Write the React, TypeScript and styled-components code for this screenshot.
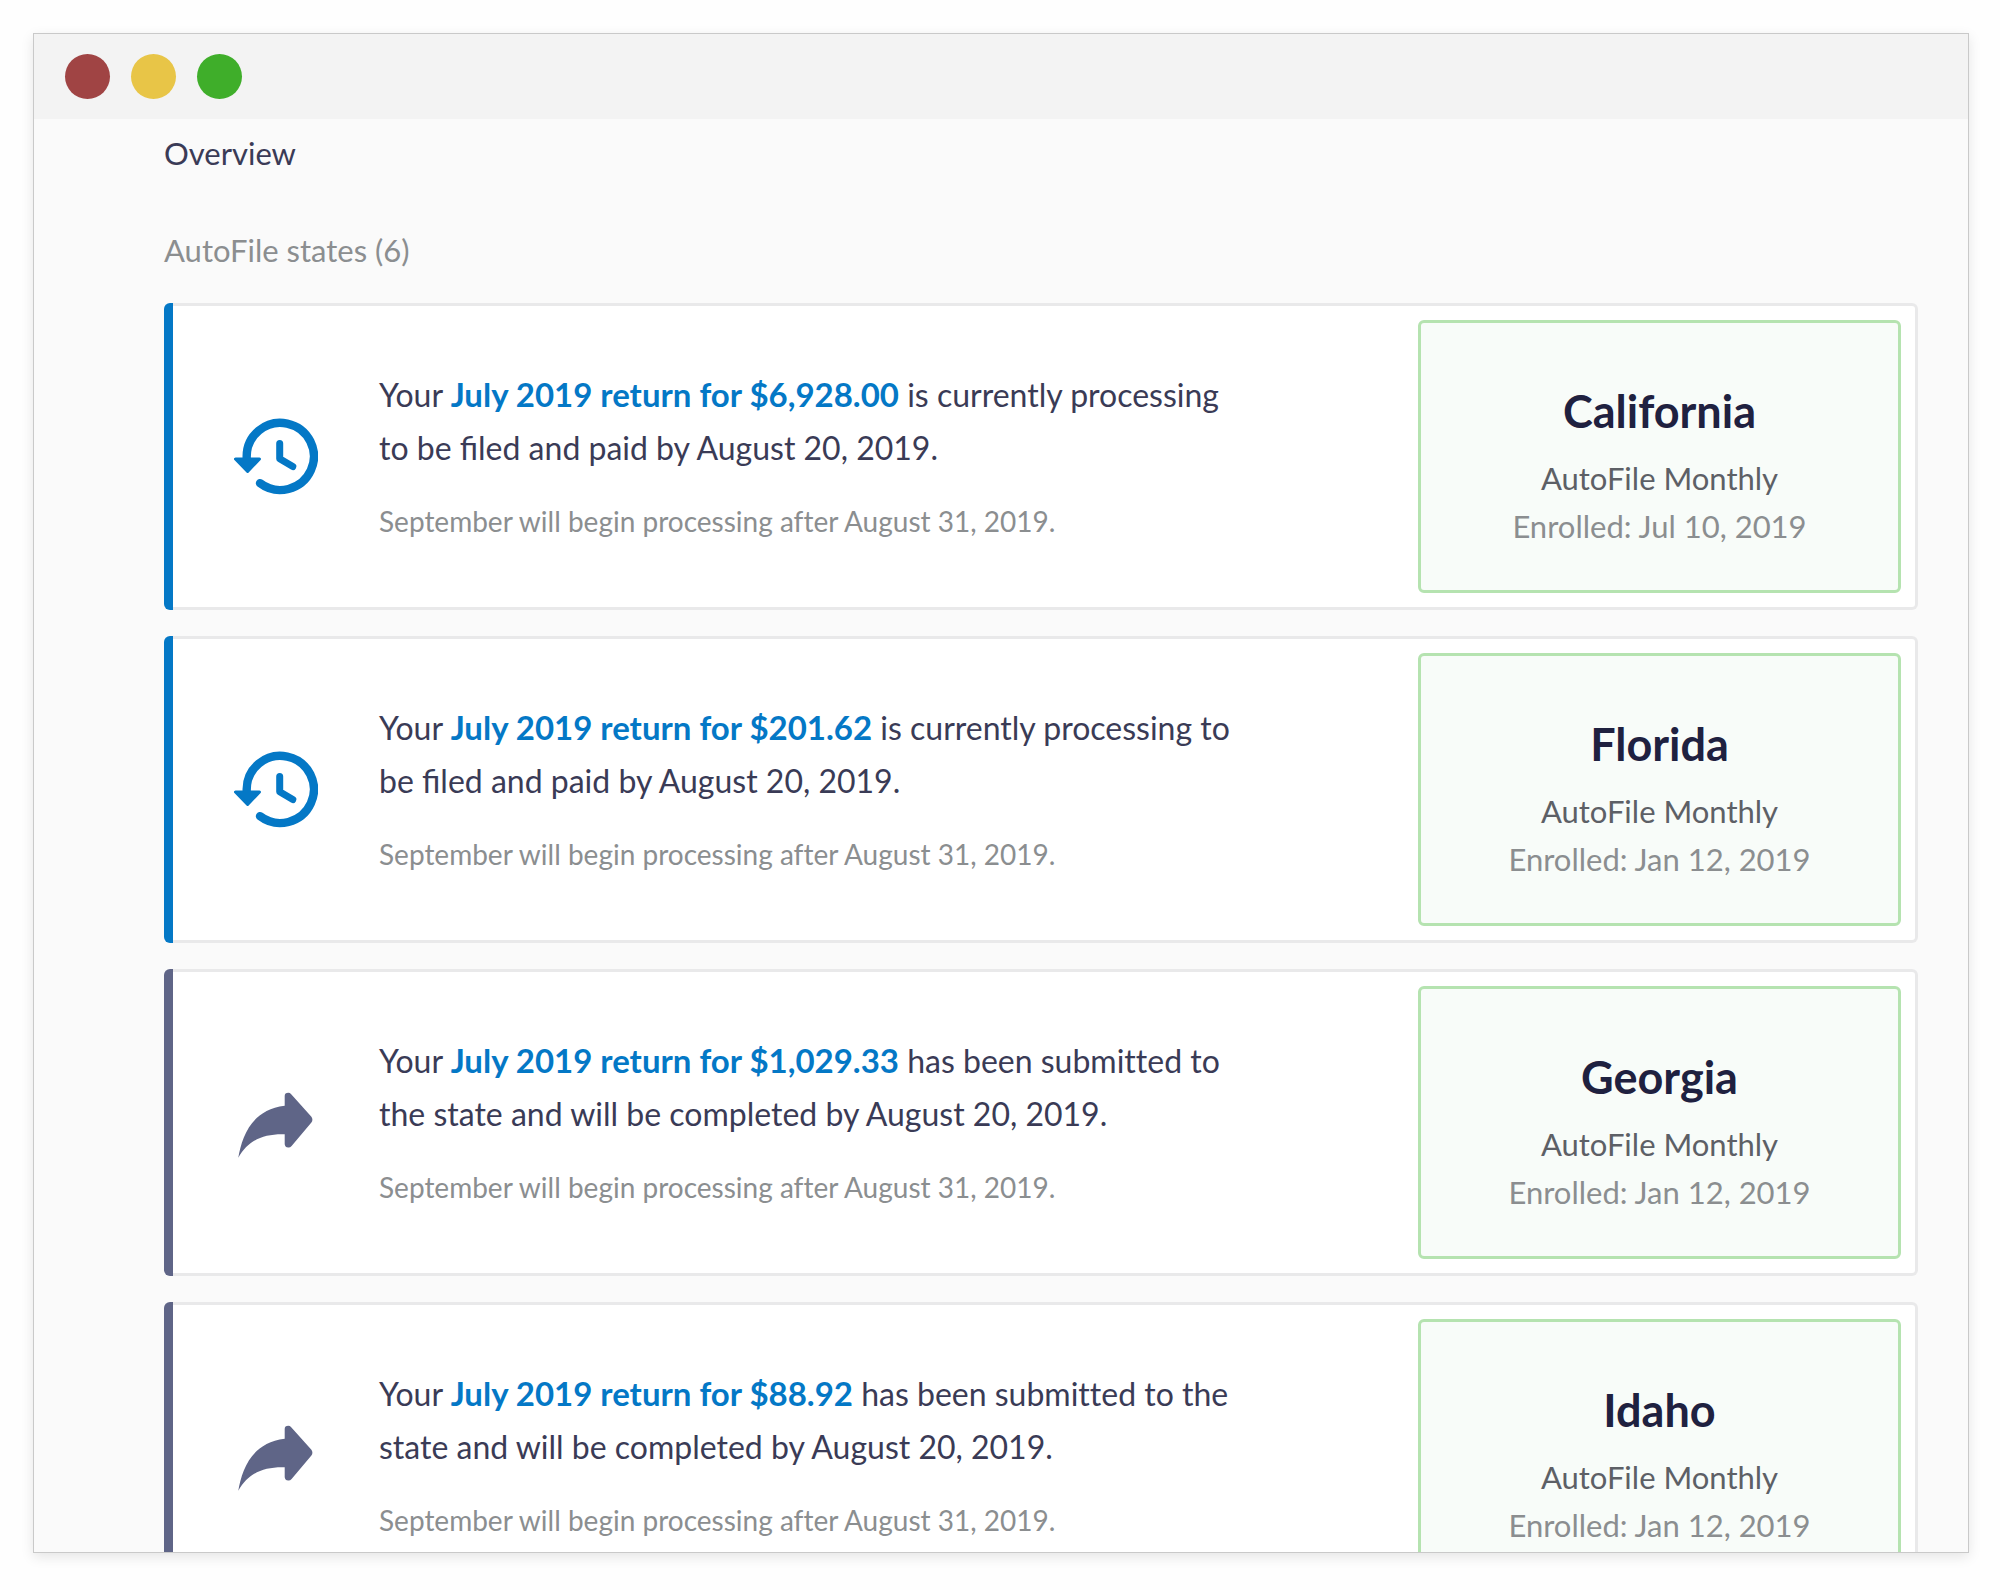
import React from 'react';
import styled, { createGlobalStyle } from 'styled-components';

const color = {
  ink: '#3a3b56',
  heading: '#1f2140',
  body: '#5d6066',
  muted: '#8b8e90',
  blue: '#0478c6',
  slate: '#5f6587',
};

const GlobalStyle = createGlobalStyle`
  * { box-sizing: border-box; }
  body {
    margin: 0;
    background: #fefefe;
    font-family: Lato, 'Open Sans', sans-serif;
    color: ${color.ink};
  }
`;

const Page = styled.div`
  height: 100vh;
  min-height: 600px;
  padding: 33px 31px 37px 33px;
`;

const Frame = styled.div`
  display: flex;
  flex-direction: column;
  height: 100%;
  overflow: hidden;
  border: 1px solid #c9c9c9;
  background: #fafafa;
  box-shadow: 0 4px 12px rgba(0, 0, 0, 0.1);
`;

const TitleBar = styled.header`
  display: flex;
  flex: none;
  align-items: center;
  gap: 21px;
  height: 85px;
  padding: 0 31px;
  background: #f3f3f3;
`;

const Dot = styled.span<{ $fill: string }>`
  width: 45px;
  height: 45px;
  border-radius: 50%;
  background: ${(p) => p.$fill};
`;

const Content = styled.main`
  padding: 10px 50px 30px 130px;
`;

const Title = styled.h1`
  margin: 0 0 49px;
  font-size: 31px;
  line-height: 48px;
  font-weight: 400;
`;

const Subtitle = styled.h2`
  margin: 0 0 29px;
  font-size: 31px;
  line-height: 48px;
  font-weight: 400;
  color: ${color.muted};
`;

const CardList = styled.ul`
  display: flex;
  flex-direction: column;
  gap: 26px;
  margin: 0;
  padding: 0;
  list-style: none;
`;

const Card = styled.li`
  display: flex;
`;

const Accent = styled.div<{ $fill: string }>`
  flex: none;
  width: 9px;
  border-radius: 6px 0 0 6px;
  background: ${(p) => p.$fill};
`;

const CardBody = styled.div`
  display: grid;
  flex: 1;
  grid-template-columns: 206px 1fr 483px;
  align-items: center;
  padding: 14px 14px 14px 0;
  border: 3px solid #e9e9ea;
  border-left: none;
  border-radius: 0 6px 6px 0;
  background: #fff;
`;

const IconCell = styled.div`
  display: flex;
  justify-content: center;
`;

const Message = styled.div`
  padding-right: 176px;
`;

const Summary = styled.p<{ $ligatures: boolean }>`
  margin: 0 0 22px;
  font-size: 32px;
  line-height: 53px;
  font-variant-ligatures: ${(p) => (p.$ligatures ? 'normal' : 'none')};
`;

const ReturnLink = styled.a`
  font-size: 33px;
  line-height: 1;
  font-weight: 700;
  color: ${color.blue};
  text-decoration: none;
`;

const Note = styled.p`
  margin: 0;
  font-size: 28px;
  line-height: 50px;
  font-variant-ligatures: none;
  color: ${color.muted};
`;

const StateBox = styled.section`
  padding: 60px 20px 40px;
  border: 3px solid #b5e3b0;
  border-radius: 6px;
  background: #f8fcf9;
  text-align: center;
`;

const StateName = styled.h3`
  margin: 0 0 15px;
  font-size: 45px;
  line-height: 56px;
  font-weight: 700;
  color: ${color.heading};
`;

const StateLine = styled.p<{ $color: string }>`
  margin: 0;
  font-size: 31px;
  line-height: 48px;
  color: ${(p) => p.$color};
`;

const HistoryIcon = () => (
  <svg width="84" height="80" viewBox="0 0 84 80" fill="none" stroke={color.blue} strokeLinecap="round" strokeLinejoin="round" aria-hidden="true">
    <path d="M12.7 42V39.9A33.600 33.600 0 1 1 26 66.2" strokeWidth="8.4" />
    <path d="M1.500 42H25.500L13.600 54.400Z" fill={color.blue} strokeWidth="3" />
    <path d="M45.7 26.500V41.800L58.800 49.600" strokeWidth="7" />
  </svg>
);

const ShareIcon = () => (
  <svg width="84" height="80" viewBox="0 0 84 80" fill={color.slate} aria-hidden="true">
    <path d="M4.3 74.8C8 54 17 27 50.7 22.8V13Q50.7 9.8 54.3 9.8Q56 9.8 57.2 11.2L77.4 33.8Q79.4 36.8 77.4 39.6L57.6 63Q56 64.8 54.3 64.6Q50.7 64 50.7 61V51.2C30 50.5 14 57 4.3 74.8Z" />
  </svg>
);

type Status = 'processing' | 'submitted';

const filings: { state: string; amount: string; status: Status; enrolled: string }[] = [
  { state: 'California', amount: '$6,928.00', status: 'processing', enrolled: 'Jul 10, 2019' },
  { state: 'Florida', amount: '$201.62', status: 'processing', enrolled: 'Jan 12, 2019' },
  { state: 'Georgia', amount: '$1,029.33', status: 'submitted', enrolled: 'Jan 12, 2019' },
  { state: 'Idaho', amount: '$88.92', status: 'submitted', enrolled: 'Jan 12, 2019' },
];

const statusInfo = {
  processing: {
    accent: color.blue,
    ligatures: true,
    Icon: HistoryIcon,
    text: 'is currently processing to be filed and paid by August 20, 2019.',
  },
  submitted: {
    accent: color.slate,
    ligatures: false,
    Icon: ShareIcon,
    text: 'has been submitted to the state and will be completed by August 20, 2019.',
  },
};

export default function App() {
  return (
    <Page>
      <GlobalStyle />
      <Frame>
        <TitleBar>
          <Dot $fill="#a04444" />
          <Dot $fill="#e8c547" />
          <Dot $fill="#3fae2a" />
        </TitleBar>
        <Content>
          <Title>Overview</Title>
          <Subtitle>AutoFile states (6)</Subtitle>
          <CardList>
            {filings.map(({ state, amount, status, enrolled }) => {
              const { accent, ligatures, Icon, text } = statusInfo[status];
              return (
                <Card key={state}>
                  <Accent $fill={accent} />
                  <CardBody>
                    <IconCell>
                      <Icon />
                    </IconCell>
                    <Message>
                      <Summary $ligatures={ligatures}>
                        Your <ReturnLink href="#">July 2019 return for {amount}</ReturnLink> {text}
                      </Summary>
                      <Note>September will begin processing after August 31, 2019.</Note>
                    </Message>
                    <StateBox>
                      <StateName>{state}</StateName>
                      <StateLine $color={color.body}>AutoFile Monthly</StateLine>
                      <StateLine $color={color.muted}>Enrolled: {enrolled}</StateLine>
                    </StateBox>
                  </CardBody>
                </Card>
              );
            })}
          </CardList>
        </Content>
      </Frame>
    </Page>
  );
}
